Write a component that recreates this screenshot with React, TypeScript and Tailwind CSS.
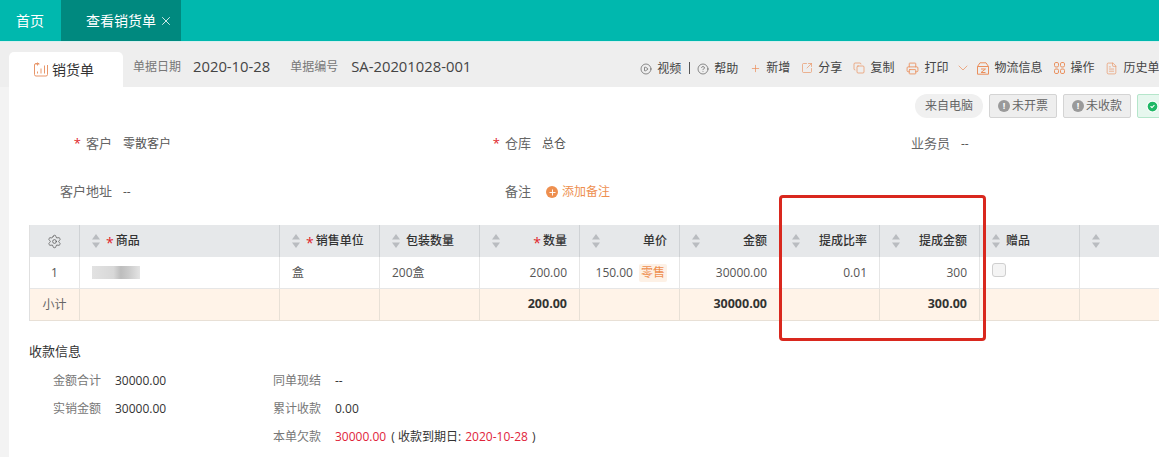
import { CirclePlay, CircleHelp, Plus, SquareArrowOutUpRight, Copy, Printer, ChevronDown, Settings, X, CircleCheck, FileText } from 'lucide-react'

function SortIcon() {
  return (
    <svg width="8" height="14" viewBox="0 0 8 14" className="shrink-0 text-[#b9bcc0]" fill="currentColor">
      <path d="M4 0 8 5.5H0z" />
      <path d="M0 8.5h8L4 14z" />
    </svg>
  )
}

function Star({ className = '' }: { className?: string }) {
  return <span className={`text-[#e0252b] ${className}`}>*</span>
}

function HeadCell({ label, required, right }: { label?: string; required?: boolean; right?: boolean }) {
  return (
    <div className="flex items-center h-[32px] pl-[12px] pr-[12px] border-r border-[#cfd2d5] font-medium text-[#333]">
      <SortIcon />
      <div className={`flex items-center flex-1 ${right ? 'justify-end' : 'ml-[6px]'}`}>
        {required && <Star className="mr-[2px] text-[14px] leading-none pt-[3px]" />}
        {label}
      </div>
    </div>
  )
}

function BodyCell({ children, right, className = '' }: { children?: React.ReactNode; right?: boolean; className?: string }) {
  return (
    <div className={`flex items-center h-[32px] px-[12px] border-r border-b border-[#e6e6e6] text-[#555] ${right ? 'justify-end' : ''} ${className}`}>
      {children}
    </div>
  )
}

function TotalCell({ children }: { children?: React.ReactNode }) {
  return (
    <div className="flex items-center justify-end h-[32px] px-[12px] border-r border-b border-[#e8e0d6] bg-[#fff3e8] text-[12.5px] font-bold text-[#333]">
      {children}
    </div>
  )
}

function ToolItem({ icon, label, className = '' }: { icon: React.ReactNode; label: string; className?: string }) {
  return (
    <div className={`flex items-center gap-[5px] shrink-0 ${className}`}>
      {icon}
      <span>{label}</span>
    </div>
  )
}

function Field({ label, value, required, children }: { label: string; value?: string; required?: boolean; children?: React.ReactNode }) {
  return (
    <div className="flex items-center h-[20px]">
      <div className="w-[103px] shrink-0 flex justify-end items-center text-[13px] text-[#666]">
        {required && <Star className="mr-[5px]" />}
        {label}
      </div>
      <div className="ml-[11px] text-[#555]">{value}{children}</div>
    </div>
  )
}

function PayRow({ label, children, width }: { label: string; children: React.ReactNode; width: string }) {
  return (
    <div className="flex items-center h-[20px]">
      <div className={`${width} shrink-0 text-right text-[#777]`}>{label}</div>
      <div className="ml-[14px] text-[#333] whitespace-nowrap">{children}</div>
    </div>
  )
}

const orange = 'text-[#ea8f5c]'

export default function App() {
  return (
    <div className="relative w-[1159px] h-[457px] overflow-hidden bg-white text-[12px] font-['Open_Sans','Noto_Sans_CJK_SC',sans-serif]">
      <header className="flex h-[41px] bg-[#00b8ae] text-white text-[14px]">
        <div className="flex items-center pl-[16px] w-[61px]">首页</div>
        <div className="flex items-center pl-[25px] w-[120px] bg-[#00897f]">
          查看销货单
          <X size={14} strokeWidth={1.4} className="ml-[3px]" />
        </div>
      </header>

      <div className="flex items-end h-[46px] pl-[9px] bg-[#eeeeee] border-t border-[#d8f0ef]">
        <div className="flex items-center w-[114px] h-[35px] pl-[25px] bg-white rounded-t-[5px] text-[14px] text-[#333] shrink-0">
          <svg width="14" height="15" viewBox="0 0 14 15" fill="none" stroke="#e8966a" strokeWidth="1" className="mr-[4px]">
            <path d="M5 1.5H2A1.5 1.5 0 0 0 .5 3v9.5A1.5 1.5 0 0 0 2 14h10a1.5 1.5 0 0 0 1.5-1.5V3" />
            <path d="M3.5 11.5v-2M7 11.5v-5M10.5 11.5v-8" />
            <path d="M1.5 1.5h4M3.5 0v3" transform="translate(0 .5)" />
          </svg>
          销货单
        </div>
        <div className="flex items-center h-[35px] pb-[6px] whitespace-nowrap">
          <span className="ml-[10px] text-[#777]">单据日期</span>
          <span className="ml-[12px] text-[14.8px] text-[#444]">2020-10-28</span>
          <span className="ml-[20px] text-[#777]">单据编号</span>
          <span className="ml-[13px] text-[14.8px] text-[#444]">SA-20201028-001</span>
        </div>
        <div className="flex items-center h-[35px] pb-[3px] ml-[169px] text-[#444] whitespace-nowrap">
          <ToolItem className="mt-[2px]" icon={<CirclePlay size={12} strokeWidth={1.2} />} label="视频" />
          <div className="w-px h-[12px] bg-[#555] ml-[8px] mr-[7px] shrink-0" />
          <ToolItem className="mt-[2px]" icon={<CircleHelp size={12} strokeWidth={1.2} />} label="帮助" />
          <ToolItem className="ml-[12px]" icon={<Plus size={11} strokeWidth={1.6} className={orange} />} label="新增" />
          <ToolItem className="ml-[11px]" icon={<SquareArrowOutUpRight size={12} strokeWidth={1.3} className={orange} />} label="分享" />
          <ToolItem className="ml-[11px]" icon={<Copy size={12} strokeWidth={1.4} className={orange} />} label="复制" />
          <ToolItem className="ml-[12px]" icon={<Printer size={13} strokeWidth={1.6} className={orange} />} label="打印" />
          <ChevronDown size={16} strokeWidth={1.1} className={`ml-[7px] shrink-0 ${orange}`} />
          <ToolItem
            className="ml-[6px]"
            icon={
              <svg width="12" height="13" viewBox="0 0 12 13" fill="none" stroke="#ea8f5c" strokeWidth="1">
                <path d="M.5 4.5 3 .8h6l2.5 3.7v7.7H.5z" />
                <path d="M.5 4.5h11M4 7h4.5L4 10.5h4.5" />
              </svg>
            }
            label="物流信息"
          />
          <ToolItem
            className="ml-[12px]"
            icon={
              <svg width="11" height="12" viewBox="0 0 11 12" fill="none" stroke="#ea8f5c" strokeWidth="1">
                <rect x=".5" y=".5" width="4" height="4.5" rx="1.4" />
                <rect x="6.5" y=".5" width="4" height="4.5" rx="1.4" />
                <rect x=".5" y="7" width="4" height="4.5" rx="1.4" />
                <rect x="6.5" y="7" width="4" height="4.5" rx="1.4" />
              </svg>
            }
            label="操作"
          />
          <ToolItem className="ml-[11px]" icon={<FileText size={13} strokeWidth={1.2} className={orange} />} label="历史单" />
        </div>
      </div>

      <div className="flex flex-col pl-[9px] bg-[#f3f3f3]">
        <div className="bg-white h-[370px]">
          <div className="flex items-center h-[24px] mt-[7px] ml-[906px] gap-[6px] whitespace-nowrap">
            <div className="flex items-center justify-center w-[68px] h-[24px] rounded-full bg-[#f0f0f0] text-[#666] shrink-0">来自电脑</div>
            <div className="flex items-center justify-center gap-[2px] w-[68px] h-[24px] bg-[#eeeeee] border border-[#d4d4d4] rounded-[2px] text-[#666] shrink-0">
              <span className="flex items-center justify-center w-[12px] h-[12px] rounded-full bg-[#9a9a9a] text-white text-[9px] font-bold">!</span>
              未开票
            </div>
            <div className="flex items-center justify-center gap-[2px] w-[68px] h-[24px] bg-[#eeeeee] border border-[#d4d4d4] rounded-[2px] text-[#666] shrink-0">
              <span className="flex items-center justify-center w-[12px] h-[12px] rounded-full bg-[#9a9a9a] text-white text-[9px] font-bold">!</span>
              未收款
            </div>
            <div className="flex items-center w-[68px] h-[24px] pl-[8px] bg-[#e6f7ee] border border-[#b5e6cb] rounded-[2px] shrink-0">
              <CircleCheck size={13} className="text-white fill-[#1fb866]" />
            </div>
          </div>

          <div className="grid grid-cols-[419px_419px_200px] mt-[16px] gap-y-[28px]">
            <Field label="客户" value="零散客户" required />
            <Field label="仓库" value="总仓" required />
            <Field label="业务员" value="--" />
            <Field label="客户地址" value="--" />
            <Field label="备注">
              <span className="flex items-center ml-[4px] text-[#ee8f4f]">
                <span className="flex items-center justify-center w-[12px] h-[12px] mr-[4px] rounded-full bg-[#ee8f4f] text-white">
                  <Plus size={9} strokeWidth={2.5} />
                </span>
                添加备注
              </span>
            </Field>
          </div>

          <div className="ml-[20px] mt-[23px] w-[1130px] grid grid-cols-[50px_200px_100px_100px_100px_100px_100px_100px_100px_100px_80px] border-l border-[#e0e0e0]">
            <div className="flex items-center justify-center h-[32px] border-r border-[#cfd2d5] bg-[#e6e8ea] text-[#555]">
              <Settings size={15} strokeWidth={1.2} />
            </div>
            <div className="contents [&>div]:bg-[#e6e8ea]">
              <HeadCell label="商品" required />
              <HeadCell label="销售单位" required />
              <HeadCell label="包装数量" />
              <HeadCell label="数量" required right />
              <HeadCell label="单价" right />
              <HeadCell label="金额" right />
              <HeadCell label="提成比率" right />
              <HeadCell label="提成金额" right />
              <HeadCell label="赠品" />
              <HeadCell />
            </div>

            <BodyCell className="justify-center">1</BodyCell>
            <BodyCell>
              <div className="w-[48px] h-[13px] bg-[linear-gradient(90deg,#e2e2e2_0%,#d8d8d8_45%,#bdbdbd_60%,#c9c9c9_75%,#e4e4e4_100%)]" />
            </BodyCell>
            <BodyCell>盒</BodyCell>
            <BodyCell>200盒</BodyCell>
            <BodyCell right>200.00</BodyCell>
            <BodyCell right>
              150.00
              <span className="ml-[6px] px-[2px] rounded-[2px] bg-[#fdf1e6] text-[#ee8f4f]">零售</span>
            </BodyCell>
            <BodyCell right>30000.00</BodyCell>
            <BodyCell right>0.01</BodyCell>
            <BodyCell right>300</BodyCell>
            <BodyCell>
              <div className="w-[14px] h-[14px] mb-[6px] bg-[#f4f4f4] border border-[#cfcfcf] rounded-[3px]" />
            </BodyCell>
            <BodyCell />

            <div className="flex items-center justify-center h-[32px] border-r border-b border-[#e8e0d6] bg-[#fff3e8] text-[#666]">小计</div>
            <TotalCell />
            <TotalCell />
            <TotalCell />
            <TotalCell>200.00</TotalCell>
            <TotalCell />
            <TotalCell>30000.00</TotalCell>
            <TotalCell />
            <TotalCell>300.00</TotalCell>
            <TotalCell />
            <TotalCell />
          </div>

          <div className="ml-[20px] mt-[20px] text-[13px] text-[#333] leading-[20px]">收款信息</div>
          <div className="flex mt-[10px] ml-[20px]">
            <div className="flex flex-col gap-[8px] w-[242px]">
              <PayRow label="金额合计" width="w-[72px]">30000.00</PayRow>
              <PayRow label="实销金额" width="w-[72px]">30000.00</PayRow>
            </div>
            <div className="flex flex-col gap-[8px]">
              <PayRow label="同单现结" width="w-[50px]">--</PayRow>
              <PayRow label="累计收款" width="w-[50px]">0.00</PayRow>
              <PayRow label="本单欠款" width="w-[50px]">
                <span className="text-[#e0243a]">30000.00</span>
                <span className="ml-[2px]"> ( 收款到期日: </span>
                <span className="ml-[1px] text-[#e0243a]">2020-10-28</span>
                <span className="ml-[1px]"> )</span>
              </PayRow>
            </div>
          </div>
        </div>
      </div>

      {/* red annotation drawn over the table */}
      <div className="absolute left-[779px] top-[195px] w-[207px] h-[146px] border-[3px] border-[#d9281e] rounded-[4px] pointer-events-none" />
    </div>
  )
}
